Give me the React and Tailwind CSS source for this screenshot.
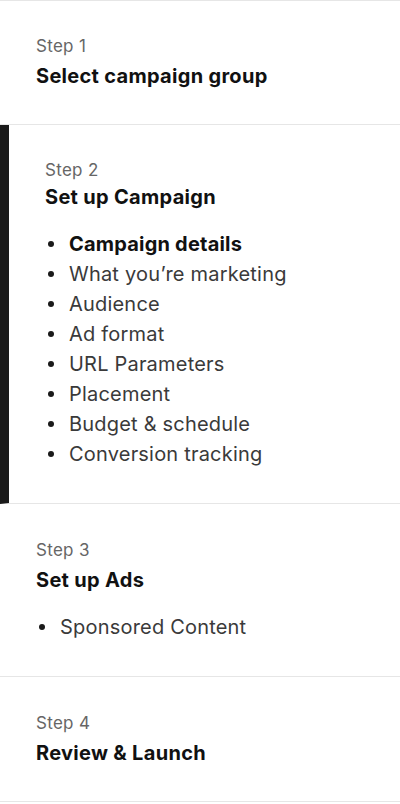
import React from 'react';

const steps = [
  { label: 'Step 1', title: 'Select campaign group', first: true },
  {
    label: 'Step 2',
    title: 'Set up Campaign',
    active: true,
    items: [
      'Campaign details',
      'What you’re marketing',
      'Audience',
      'Ad format',
      'URL Parameters',
      'Placement',
      'Budget & schedule',
      'Conversion tracking',
    ],
  },
  { label: 'Step 3', title: 'Set up Ads', items: ['Sponsored Content'] },
  { label: 'Step 4', title: 'Review & Launch' },
];

const StepSection = ({ step }) => {
  let pad = 'pt-[35px] pb-[35px]';
  if (step.active) pad = 'pt-[34px] pb-[34px]';
  else if (step.items) pad = 'pt-[35px] pb-[34px]';
  else if (step.first) pad = 'pt-[34px] pb-[35px]';

  return (
    <div
      className={
        'border-b border-[#e6e6e6] pl-9 pr-6 ' + pad +
        (step.active ? ' border-l-[9px] border-l-[#1a1a1a]' : '')
      }
    >
      <div className="text-[17px] leading-[22px] tracking-[0.3px] text-[#666666]">{step.label}</div>
      <div
        className={
          'text-[20px] leading-[26px] font-bold tracking-[0.3px] text-[#111111] ' +
          (step.active ? 'mt-[3px]' : 'mt-[6px]')
        }
      >
        {step.title}
      </div>
      {step.items && (
        <ul className="mt-[19px]">
          {step.items.map((item, i) => (
            <li key={item} className="flex items-center h-[30px]">
              <span className="w-[6px] h-[6px] rounded-full bg-[#1a1a1a] ml-[3px] mr-[15px] flex-shrink-0" />
              <span
                className={
                  'text-[20px] leading-[30px] tracking-[0.2px] ' +
                  (step.active && i === 0 ? 'font-bold text-[#111111]' : 'text-[#3a3a3a]')
                }
              >
                {item}
              </span>
            </li>
          ))}
        </ul>
      )}
    </div>
  );
};

export default function App() {
  return (
    <div className="w-[400px] min-h-[804px] bg-white border-t border-[#e6e6e6] font-['Inter',sans-serif]">
      {steps.map(step => (
        <StepSection key={step.label} step={step} />
      ))}
    </div>
  );
}
